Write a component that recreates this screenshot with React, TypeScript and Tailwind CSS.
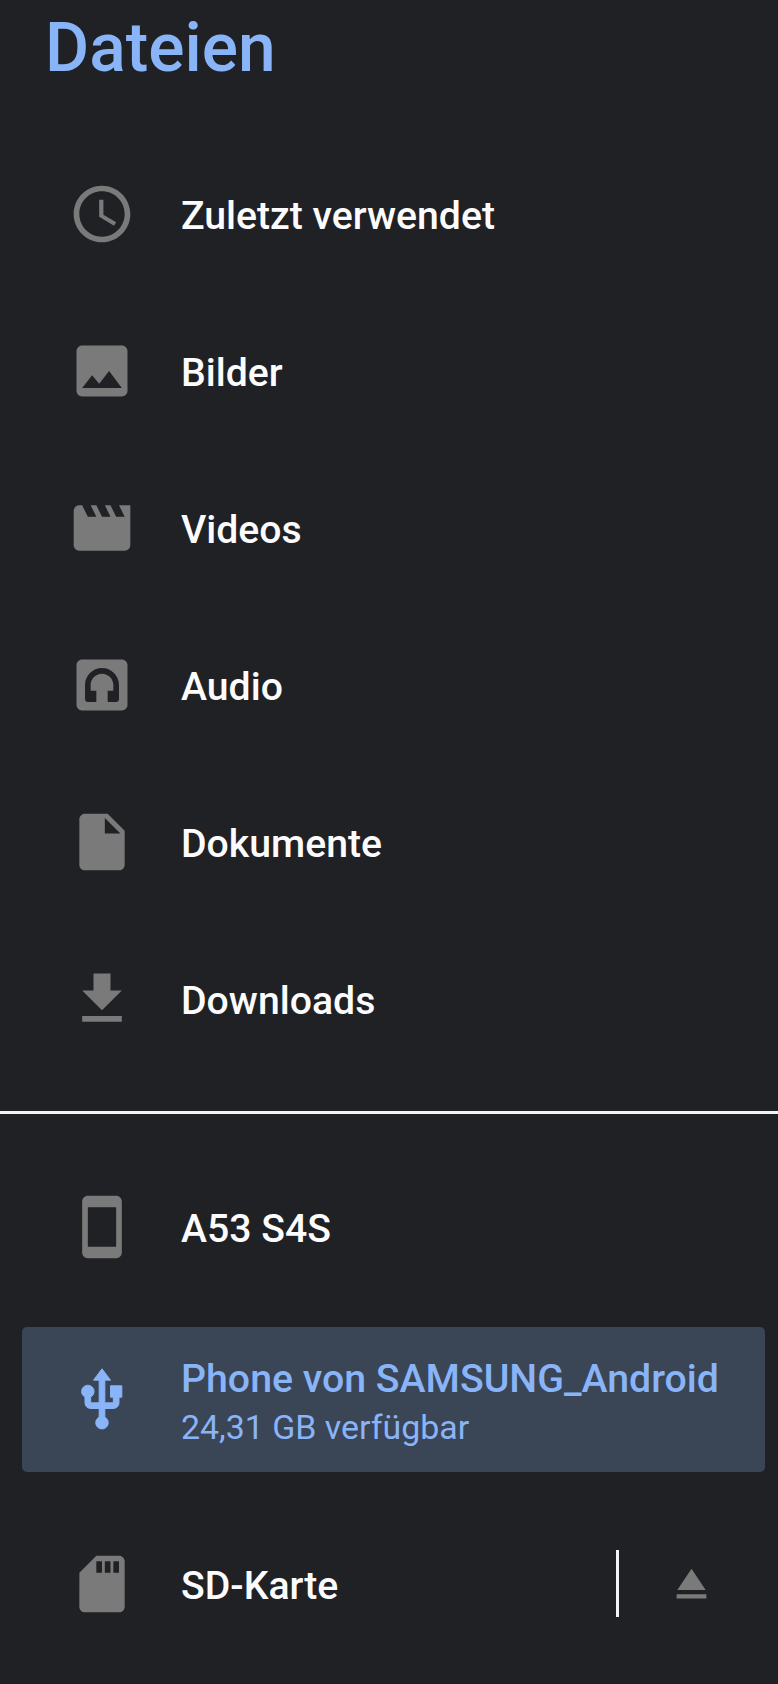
import type { ReactNode } from "react";

const icons = {
  recent:
    "M11.99 2C6.47 2 2 6.48 2 12s4.47 10 9.99 10C17.52 22 22 17.52 22 12S17.52 2 11.99 2zM12 20c-4.42 0-8-3.58-8-8s3.58-8 8-8 8 3.58 8 8-3.58 8-8 8zM12.5 7H11v6l5.25 3.15.75-1.23-4.5-2.67z",
  image:
    "M21 19V5c0-1.1-.9-2-2-2H5c-1.1 0-2 .9-2 2v14c0 1.1.9 2 2 2h14c1.1 0 2-.9 2-2zM8.5 13.5l2.5 3.01L14.5 12l4.5 6H5l3.5-4.5z",
  video:
    "M18 4l2 4h-3l-2-4h-2l2 4h-3l-2-4H8l2 4H7L5 4H4c-1.1 0-1.99.9-1.99 2L2 18c0 1.1.9 2 2 2h16c1.1 0 2-.9 2-2V4h-4z",
  audio:
    "M19 3H5c-1.1 0-2 .9-2 2v14c0 1.1.9 2 2 2h14c1.1 0 2-.9 2-2V5c0-1.1-.9-2-2-2zM12 6c-3.31 0-6 2.69-6 6v5c0 .55.45 1 1 1h3v-4H8v-2c0-2.21 1.79-4 4-4s4 1.79 4 4v2h-2v4h3c.55 0 1-.45 1-1v-5c0-3.31-2.69-6-6-6z",
  document:
    "M6 2c-1.1 0-1.99.9-1.99 2L4 20c0 1.1.89 2 1.99 2H18c1.1 0 2-.9 2-2V8l-6-6H6zm7 7V3.5L18.5 9H13z",
  download: "M19 9h-4V3H9v6H5l7 7 7-7zM5 18v2h14v-2H5z",
  phone:
    "M17 1H7c-1.1 0-2 .9-2 2v18c0 1.1.9 2 2 2h10c1.1 0 2-.9 2-2V3c0-1.1-.9-2-2-2zm0 18H7V5h10v14z",
  usb: "M15 7v4h1v2h-3V5h2l-3-4-3 4h2v8H8v-2.07c.7-.37 1.2-1.08 1.2-1.93 0-1.21-.99-2.2-2.2-2.2-1.21 0-2.2.99-2.2 2.2 0 .85.5 1.56 1.2 1.93V13c0 1.11.89 2 2 2h3v3.05c-.71.37-1.2 1.1-1.2 1.95 0 1.22.99 2.2 2.2 2.2 1.21 0 2.2-.98 2.2-2.2 0-.85-.49-1.58-1.2-1.95V15h3c1.11 0 2-.89 2-2v-2h1V7h-4z",
  sd: "M18 2h-8L4.02 8 4 20c0 1.1.9 2 2 2h12c1.1 0 2-.9 2-2V4c0-1.1-.9-2-2-2zm-6 6h-2V4h2v4zm3 0h-2V4h2v4zm3 0h-2V4h2v4z",
  eject: "M5 17h14v2H5zM12 5L5.33 15h13.34z",
};

type IconName = keyof typeof icons;

function Icon({ name, className }: { name: IconName; className: string }) {
  return (
    <svg viewBox="0 0 24 24" fill="currentColor" fillRule="evenodd" className={className} aria-hidden="true">
      <path d={icons[name]} />
    </svg>
  );
}

function Row({ icon, label, children }: { icon: IconName; label: string; children?: ReactNode }) {
  return (
    <li className="flex h-[157px] items-center pl-[68px]">
      <Icon name={icon} className="size-[68px] shrink-0 text-[#7a7a7a]" />
      <span className="ml-[45px] pt-[5px] text-[39.2px] leading-[46px] font-medium whitespace-nowrap">{label}</span>
      {children}
    </li>
  );
}

const categories: { icon: IconName; label: string }[] = [
  { icon: "recent", label: "Zuletzt verwendet" },
  { icon: "image", label: "Bilder" },
  { icon: "video", label: "Videos" },
  { icon: "audio", label: "Audio" },
  { icon: "document", label: "Dokumente" },
  { icon: "download", label: "Downloads" },
];

export default function App() {
  return (
    <nav className="h-[1684px] w-full overflow-hidden bg-[#202124] font-[Roboto,sans-serif] text-[#fcfcfe]">
      <h1 className="pl-[45px] text-[67.7px] leading-[96px] font-medium text-[#8ab4f8]">Dateien</h1>

      <ul className="mt-[39px]">
        {categories.map((item) => (
          <Row key={item.label} icon={item.icon} label={item.label} />
        ))}
      </ul>

      <hr className="mt-[34px] h-[3px] border-0 bg-[#f1f3f6]" />

      <ul className="mt-[34px]">
        <Row icon="phone" label="A53 S4S" />
        <li className="mt-[22px] mr-[13px] mb-[33px] ml-[22px] flex h-[145px] items-center rounded-[5px] bg-[#3a4556] pl-[46px] text-[#8ab4f8]">
          <Icon name="usb" className="size-[68px] shrink-0 stroke-current stroke-[0.35]" />
          <div className="ml-[45px] pt-1.5 whitespace-nowrap">
            <div className="text-[39.25px] leading-[51px] font-medium">Phone von SAMSUNG_Android</div>
            <div className="text-[33.9px] leading-[46px]">24,31 GB verfügbar</div>
          </div>
        </li>
        <Row icon="sd" label="SD-Karte">
          <div className="mr-[61px] ml-auto flex items-center">
            <div className="h-[67px] w-[3px] bg-[#f1f3f6]" />
            <button type="button" aria-label="Auswerfen" className="ml-[47px]">
              <Icon name="eject" className="size-[51px] text-[#7a7a7a]" />
            </button>
          </div>
        </Row>
      </ul>
    </nav>
  );
}
